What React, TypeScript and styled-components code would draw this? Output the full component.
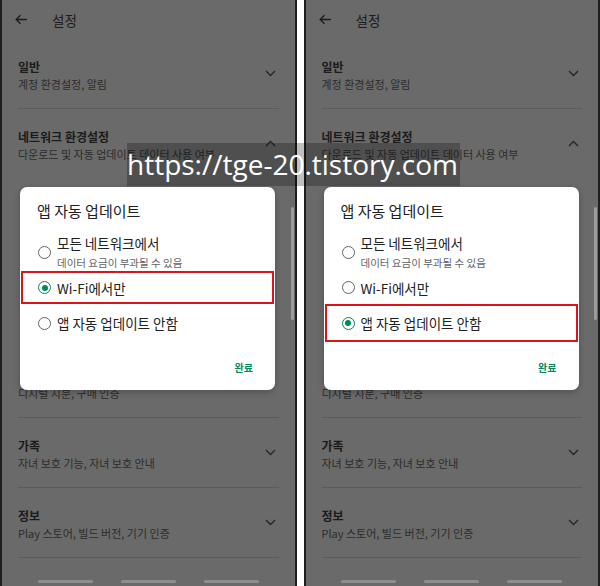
import React from "react";
import styled, { createGlobalStyle } from "styled-components";

const GlobalStyle = createGlobalStyle`
  html, body {
    margin: 0;
    padding: 0;
    background: #ffffff;
  }
  body {
    font-family: "Noto Sans CJK KR", "Noto Sans", sans-serif;
  }
`;

const Page = styled.div`
  position: relative;
  display: flex;
  gap: 7px;
  width: 600px;
  height: 586px;
  overflow: hidden;
`;

const Phone = styled.div`
  position: relative;
  flex: 1;
  display: flex;
  flex-direction: column;
  height: 586px;
  background: #6a6a6a;
  border-left: 2px solid #1f1f1f;
  border-right: 2px solid #1f1f1f;
  overflow: hidden;
`;

const Header = styled.div`
  display: flex;
  align-items: center;
  height: 39px;
  padding-left: 13px;
  gap: 24px;
  color: #1d1d1d;
  font-size: 13.5px;
  flex-shrink: 0;
`;

const Section = styled.div<{ $noLine?: boolean }>`
  display: flex;
  align-items: center;
  justify-content: space-between;
  height: 69px;
  margin: 0 16px;
  border-bottom: 1px solid ${(p) => (p.$noLine ? "transparent" : "#5b5b5b")};
  flex-shrink: 0;
`;

/* expanded network sub-rows, hidden behind the dialog */
const ExpandedArea = styled.div`
  height: 169px;
  flex-shrink: 0;
`;

const TextBlock = styled.div`
  display: flex;
  flex-direction: column;
  align-self: flex-start;
  padding-top: 19px;
`;

const Title = styled.div`
  font-size: 12px;
  font-weight: 700;
  line-height: 18px;
  height: 18px;
  color: #1b1b1b;
`;

const Sub = styled.div`
  font-size: 11px;
  line-height: 16px;
  color: #2c2c2c;
`;

const Chevron = styled.svg`
  width: 11px;
  height: 7px;
  margin-right: 3px;
`;

const Footer = styled.div`
  margin-top: auto;
  display: flex;
  justify-content: center;
  gap: 28px;
  padding-bottom: 3px;
`;

const Handle = styled.div`
  width: 55px;
  height: 3px;
  border-radius: 2px;
  background: #8e8e8e;
`;

const ScrollBar = styled.div`
  position: absolute;
  right: 1px;
  top: 207px;
  width: 3px;
  height: 113px;
  border-radius: 2px;
  background: #9c9c9c;
`;

const Dialog = styled.div`
  position: absolute;
  left: 18px;
  top: 187px;
  width: 255px;
  height: 203px;
  background: #ffffff;
  border-radius: 7px;
  box-shadow: 0 2px 6px rgba(0, 0, 0, 0.25);
  display: flex;
  flex-direction: column;
`;

const DialogTitle = styled.div`
  padding: 14px 17px 8px;
  font-size: 15px;
  line-height: 20px;
  color: #202124;
`;

const Option = styled.div<{ $h: number; $top: number; $boxed?: boolean }>`
  display: flex;
  align-items: center;
  gap: 6px;
  height: ${(p) => p.$h}px;
  padding: ${(p) => p.$top}px 0 0 15px;
  margin: 0 1px;
  box-sizing: border-box;
  border: 2px solid ${(p) => (p.$boxed ? "#d5171d" : "transparent")};
`;

const Radio = styled.span<{ $on?: boolean }>`
  position: relative;
  width: 13px;
  height: 13px;
  box-sizing: border-box;
  border-radius: 50%;
  border: 1.6px solid ${(p) => (p.$on ? "#01875f" : "#5f6368")};
  flex-shrink: 0;
  &::after {
    content: "";
    display: ${(p) => (p.$on ? "block" : "none")};
    position: absolute;
    left: 50%;
    top: 50%;
    width: 6px;
    height: 6px;
    margin: -3px 0 0 -3px;
    border-radius: 50%;
    background: #01875f;
  }
`;

const OptionText = styled.div`
  display: flex;
  flex-direction: column;
  gap: 4px;
`;

const OptionLabel = styled.div`
  font-size: 13.5px;
  line-height: 18px;
  color: #202124;
`;

const OptionSub = styled.div`
  font-size: 10.5px;
  line-height: 14px;
  color: #5f6368;
`;

const DialogFooter = styled.div`
  display: flex;
  justify-content: flex-end;
  padding: 19px 22px 15px 0;
  font-size: 10px;
  line-height: 14px;
  font-weight: 700;
  color: #01875f;
`;

const Watermark = styled.div`
  position: absolute;
  left: 127px;
  top: 143px;
  width: 333px;
  height: 43px;
  background: rgba(0, 0, 0, 0.25);
  color: #ffffff;
  font-family: "Open Sans", "Noto Sans", sans-serif;
  font-size: 28px;
  line-height: 42px;
  box-sizing: border-box;
  white-space: nowrap;
`;

const Down = () => (
  <Chevron viewBox="0 0 11 7">
    <polyline points="1,1 5.5,5.5 10,1" fill="none" stroke="#262626" strokeWidth="1.4" />
  </Chevron>
);

const Up = () => (
  <Chevron viewBox="0 0 11 7">
    <polyline points="1,6 5.5,1.5 10,6" fill="none" stroke="#262626" strokeWidth="1.4" />
  </Chevron>
);

const sections = [
  { title: "가족", sub: "자녀 보호 기능, 자녀 보호 안내" },
  { title: "정보", sub: "Play 스토어, 빌드 버전, 기기 인증" },
];

const options = [
  { label: "모든 네트워크에서", sub: "데이터 요금이 부과될 수 있음", h: 42, top: 4 },
  { label: "Wi-Fi에서만", h: 33, top: 0 },
  { label: "앱 자동 업데이트 안함", h: 38, top: 0 },
];

function Screen({ selected }: { selected: number }) {
  return (
    <Phone>
      <Header>
        <svg width="13" height="11" viewBox="0 0 13 11">
          <path d="M12 5.5H1.5M5.5 1.2L1.2 5.5l4.3 4.3" fill="none" stroke="#1d1d1d" strokeWidth="1.4" />
        </svg>
        <span>설정</span>
      </Header>
      <Section>
        <TextBlock>
          <Title>일반</Title>
          <Sub>계정 환경설정, 알림</Sub>
        </TextBlock>
        <Down />
      </Section>
      <Section $noLine>
        <TextBlock>
          <Title>네트워크 환경설정</Title>
          <Sub>다운로드 및 자동 업데이트 데이터 사용 여부</Sub>
        </TextBlock>
        <Up />
      </Section>
      <ExpandedArea />
      <Section>
        <TextBlock>
          <Title />
          <Sub>디지털 지분, 구매 인증</Sub>
        </TextBlock>
      </Section>
      {sections.map((s) => (
        <Section key={s.title}>
          <TextBlock>
            <Title>{s.title}</Title>
            <Sub>{s.sub}</Sub>
          </TextBlock>
          <Down />
        </Section>
      ))}
      <Footer>
        <Handle />
        <Handle />
        <Handle />
      </Footer>
      <ScrollBar />
      <Dialog>
        <DialogTitle>앱 자동 업데이트</DialogTitle>
        {options.map((o, i) => (
          <Option key={o.label} $h={o.h} $top={o.top} $boxed={i === selected}>
            <Radio $on={i === selected} />
            <OptionText>
              <OptionLabel>{o.label}</OptionLabel>
              {o.sub && <OptionSub>{o.sub}</OptionSub>}
            </OptionText>
          </Option>
        ))}
        <DialogFooter>완료</DialogFooter>
      </Dialog>
    </Phone>
  );
}

export default function App() {
  return (
    <>
      <GlobalStyle />
      <Page>
        <Screen selected={1} />
        <Screen selected={2} />
        <Watermark>https://tge-20.tistory.com</Watermark>
      </Page>
    </>
  );
}
